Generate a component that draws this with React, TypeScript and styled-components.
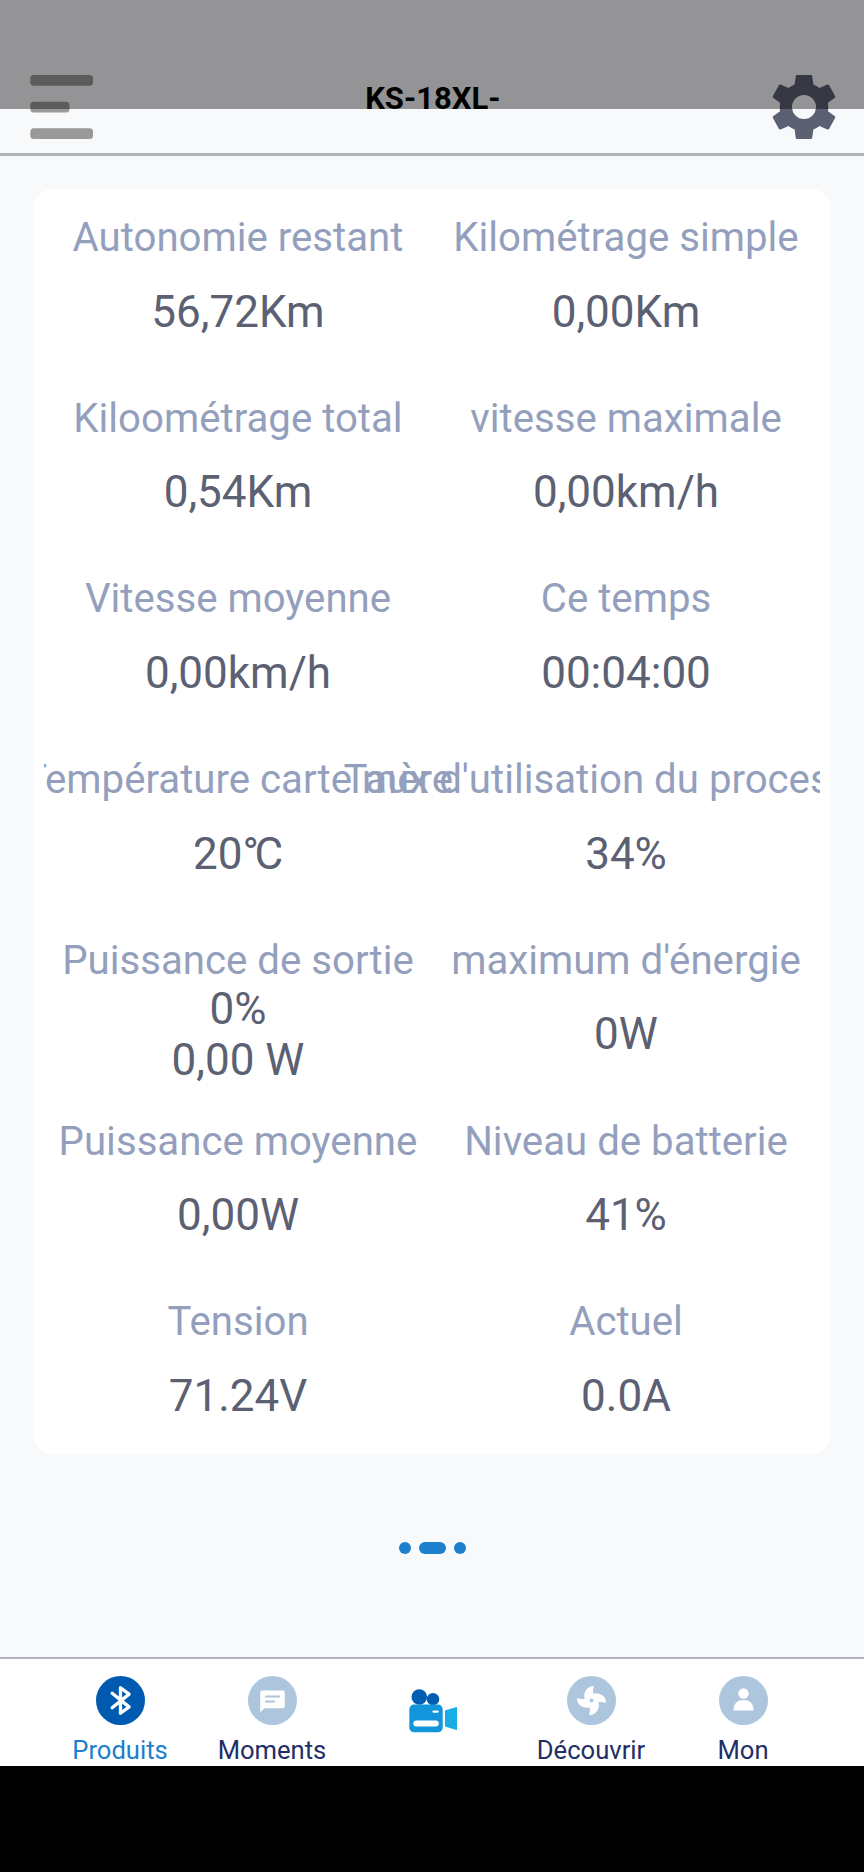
import React from "react";
import styled, { createGlobalStyle } from "styled-components";

const GlobalStyle = createGlobalStyle`
  * { box-sizing: border-box; }
  body { margin: 0; background: #000; font-family: Roboto, "Noto Sans", sans-serif; }
`;

const Screen = styled.div`
  position: relative;
  width: 864px;
  height: 1872px;
  overflow: hidden;
  display: flex;
  flex-direction: column;
  background: #f8f9fb;
`;

const StatusShade = styled.div`
  position: absolute;
  inset: 0 0 auto 0;
  height: 109px;
  background: rgba(0, 0, 0, 0.405);
`;

const Header = styled.header`
  flex: none;
  height: 156px;
  padding: 75px 28.5px 0 30px;
  display: flex;
  justify-content: space-between;
  align-items: flex-start;
  border-bottom: 3px solid #b1b2b5;
`;

const Title = styled.h1`
  margin: 6px 0 0;
  font-size: 31px;
  line-height: 36px;
  font-weight: 700;
  color: #000;
`;

const Main = styled.main`
  flex: 1;
  display: flex;
  flex-direction: column;
  align-items: center;
  padding-top: 33px;
`;

const Card = styled.section`
  width: 798px;
  height: 1265px;
  padding: 0 11px;
  border-radius: 20px;
  background: #fff;
`;

const Grid = styled.div`
  height: 100%;
  display: grid;
  grid-template-columns: 1fr 1fr;
  grid-template-rows: repeat(7, 1fr);
  overflow: hidden;
`;

const Cell = styled.div`
  min-width: 0;
  padding-top: 25px;
  display: flex;
  flex-direction: column;
  align-items: center;
`;

const Label = styled.div`
  font-size: 40.2px;
  line-height: 47px;
  white-space: nowrap;
  color: #949fbd;
`;

const Value = styled.div`
  height: 102px;
  display: flex;
  flex-direction: column;
  justify-content: center;
  align-items: center;
  font-size: 44px;
  line-height: 51px;
  white-space: pre;
  color: #5b6072;
`;

const Degree = styled.span`
  letter-spacing: -4.5px;
`;

const Pager = styled.div`
  margin-top: 88px;
  display: flex;
  gap: 8px;
`;

const Dot = styled.span<{ $active?: boolean }>`
  width: ${(p) => (p.$active ? 27 : 12)}px;
  height: 12px;
  border-radius: 6px;
  background: #1c80cc;
`;

const Nav = styled.nav`
  flex: none;
  height: 109px;
  display: grid;
  grid-template-columns: 152px 152px 167px 152px 152px;
  justify-content: center;
  padding-right: 1px;
  border-top: 2px solid #b3b3c5;
  background: #fff;
`;

const Tab = styled.div<{ $active?: boolean }>`
  padding-top: 17px;
  display: flex;
  flex-direction: column;
  align-items: center;
  gap: 10px;
  font-size: 25.6px;
  line-height: 30px;
  color: ${(p) => (p.$active ? "#1c80cc" : "#222e66")};
`;

const Badge = styled.div<{ $active?: boolean }>`
  width: 49px;
  height: 49px;
  border-radius: 50%;
  background: ${(p) => (p.$active ? "#005bb0" : "#adc6de")};
`;

const SystemBar = styled.div`
  flex: none;
  height: 106px;
  background: #000;
`;

const MenuIcon = () => (
  <svg width="64" height="64" viewBox="0 0 64 64" fill="#999">
    <rect x="0.3" y="0" width="62.7" height="10.7" rx="3.5" />
    <rect x="0.3" y="26.7" width="39.2" height="10.7" rx="3.5" />
    <rect x="0.3" y="53.3" width="62.7" height="10.7" rx="3.5" />
  </svg>
);

const GearIcon = () => (
  <svg width="64" height="64" viewBox="-32 -32 64 64">
    <path
      fill="#5b6073"
      fillRule="evenodd"
      d="M-7-32H7Q8-32 8.2-31L9.4-22.6Q12.5-21.4 15.4-19L23.4-22.4Q24.4-22.8 25-21.9L31.2-10.8Q31.7-9.9 30.9-9.3L24-4.2Q24.5 0 24 4.2L30.9 9.3Q31.7 9.9 31.2 10.8L25 21.9Q24.4 22.8 23.4 22.4L15.4 19Q12.5 21.4 9.4 22.6L8.2 31Q8 32 7 32H-7Q-8 32-8.2 31L-9.4 22.6Q-12.5 21.4-15.4 19L-23.4 22.4Q-24.4 22.8-25 21.9L-31.2 10.8Q-31.7 9.9-30.9 9.3L-24 4.2Q-24.5 0-24-4.2L-30.9-9.3Q-31.7-9.9-31.2-10.8L-25-21.9Q-24.4-22.8-23.4-22.4L-15.4-19Q-12.5-21.4-9.4-22.6L-8.2-31Q-8-32-7-32ZM12 0A12 12 0 1 0-12 0A12 12 0 1 0 12 0Z"
    />
  </svg>
);

const BluetoothIcon = () => (
  <svg width="49" height="49" viewBox="-24.5 -24.5 49 49" fill="none" stroke="#fff" strokeWidth="3.3" strokeLinecap="round" strokeLinejoin="round">
    <path d="M-8.3-7.3L8.6 6.4L0 12.8V-12.8L8.6-6.4L-8.3 7.3" />
  </svg>
);

const ChatIcon = () => (
  <svg width="49" height="49" viewBox="-24.5 -24.5 49 49">
    <path fill="#fff" d="M-10.6-10H10.4Q12.3-10 12.3-8V5.8Q12.3 7.8 10.4 7.8H-8L-12.3 11.8V-8Q-12.3-10-10.6-10Z" />
    <path stroke="#adc6de" strokeWidth="2" strokeLinecap="round" d="M-6.6-3.9H6.6M-6.6 1.1H1.8" />
  </svg>
);

const PinwheelIcon = () => (
  <svg width="49" height="49" viewBox="-24.5 -24.5 49 49">
    {[0, 90, 180, 270].map((angle) => (
      <path
        key={angle}
        transform={`rotate(${angle})`}
        fill="#fff"
        d="M1.2-14.6Q2.4-14.8 2.2-13.5Q1-10 1.8-7L0 1L-7-2Q-7.9-5-6.6-8.5Q-4.4-13.8 1.2-14.6Z"
      />
    ))}
    <circle r="1.9" fill="#adc6de" />
  </svg>
);

const PersonIcon = () => (
  <svg width="49" height="49" viewBox="-24.5 -24.5 49 49" fill="#fff">
    <circle cy="-7" r="5.2" />
    <path d="M-10.2 9Q-9.6-.6 0-.6T10.2 9Q10.2 10 9.2 10H-9.2Q-10.2 10-10.2 9Z" />
  </svg>
);

const CameraIcon = () => (
  <svg width="50" height="49" viewBox="0 0 50 49">
    <circle cx="11.3" cy="13" r="7.8" fill="#005fb3" />
    <circle cx="25" cy="15.2" r="6.2" fill="#005fb3" />
    <rect x="1.3" y="20.6" width="33.4" height="27.7" rx="4.8" fill="#1296db" />
    <rect x="5.3" y="36.5" width="25.5" height="6" rx="3" fill="#fff" />
    <rect x="24.4" y="26.4" width="6.3" height="2.4" rx="1.2" fill="#fff" />
    <path d="M37 26.4L48.6 22.9Q49 22.9 49 23.5V45.5Q49 46.2 48.4 46L37 42.5Z" fill="#18aee5" />
  </svg>
);

const CameraTab = styled.div`
  padding: 25px 0 0 2px;
  display: flex;
  justify-content: center;
`;

const readings: { label: string; values: React.ReactNode[] }[] = [
  { label: "Autonomie restant", values: ["56,72Km"] },
  { label: "Kilométrage simple", values: ["0,00Km"] },
  { label: "Kiloométrage total", values: ["0,54Km"] },
  { label: "vitesse maximale", values: ["0,00km/h"] },
  { label: "Vitesse moyenne", values: ["0,00km/h"] },
  { label: "Ce temps", values: ["00:04:00"] },
  { label: "Température carte mère", values: [<>20<Degree>°</Degree>C</>] },
  { label: "Taux d'utilisation du processeur", values: ["34%"] },
  { label: "Puissance de sortie", values: ["0%", "0,00 W"] },
  { label: "maximum d'énergie", values: ["0W"] },
  { label: "Puissance moyenne", values: ["0,00W"] },
  { label: "Niveau de batterie", values: ["41%"] },
  { label: "Tension", values: ["71.24V"] },
  { label: "Actuel", values: ["0.0A"] },
];

export default function App() {
  return (
    <>
      <GlobalStyle />
      <Screen>
        <Header>
          <MenuIcon />
          <Title>KS-18XL-</Title>
          <GearIcon />
        </Header>
        <Main>
          <Card>
            <Grid>
              {readings.map((r) => (
                <Cell key={r.label}>
                  <Label>{r.label}</Label>
                  <Value>
                    {r.values.map((v, i) => (
                      <span key={i}>{v}</span>
                    ))}
                  </Value>
                </Cell>
              ))}
            </Grid>
          </Card>
          <Pager>
            <Dot />
            <Dot $active />
            <Dot />
          </Pager>
        </Main>
        <Nav>
          <Tab $active>
            <Badge $active><BluetoothIcon /></Badge>
            Produits
          </Tab>
          <Tab>
            <Badge><ChatIcon /></Badge>
            Moments
          </Tab>
          <CameraTab>
            <CameraIcon />
          </CameraTab>
          <Tab>
            <Badge><PinwheelIcon /></Badge>
            Découvrir
          </Tab>
          <Tab>
            <Badge><PersonIcon /></Badge>
            Mon
          </Tab>
        </Nav>
        <SystemBar />
        <StatusShade />
      </Screen>
    </>
  );
}
